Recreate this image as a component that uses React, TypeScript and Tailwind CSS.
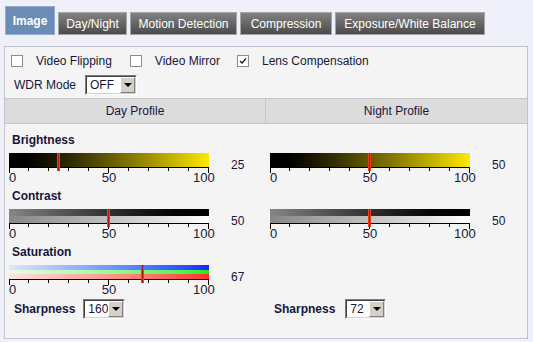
import React from "react";

// ─── TYPES ────────────────────────────────────────────────────────────────────

type BarKind = "brightness" | "contrast" | "saturation";

interface SliderProps {
  label?: string;
  value:  number;
  kind:   BarKind;
}

const TABS = [
  { label: "Day/Night",              w: "w-[69px]"  },
  { label: "Motion Detection",       w: "w-[107px]" },
  { label: "Compression",            w: "w-[92px]"  },
  { label: "Exposure/White Balance", w: "w-[150px]" },
];

const TICKS = Array.from({ length: 11 }, (_, i) => i);

// ─── SMALL PARTS ──────────────────────────────────────────────────────────────

function Checkbox({ checked }: { checked?: boolean }) {
  return (
    <span className="flex h-[12px] w-[12px] shrink-0 items-center justify-center border border-[#8c8c8c] bg-white">
      {checked && (
        <svg width="8" height="8" viewBox="0 0 8 8">
          <path d="M1 4 L3 6 L7 1.5" fill="none" stroke="#1a1a1a" strokeWidth="1.3" />
        </svg>
      )}
    </span>
  );
}

function Select({ value, className }: { value: string; className: string }) {
  return (
    <div className={`flex h-[20px] border border-t-[#7c7c7c] border-l-[#7c7c7c] border-b-white border-r-white ${className}`}>
      <div className="flex flex-1 items-center border border-t-[#404040] border-l-[#404040] border-b-[#d4d0c8] border-r-[#d4d0c8] bg-white">
        <span className="pl-[3px] text-[12px] leading-[14px]">{value}</span>
        <span className="ml-auto flex h-full w-[15px] items-center justify-center border border-t-white border-l-white border-b-[#808080] border-r-[#808080] bg-[#d4d0c8]">
          <span className="h-0 w-0 border-x-[4px] border-t-[4px] border-x-transparent border-t-black" />
        </span>
      </div>
    </div>
  );
}

function Bar({ kind }: { kind: BarKind }) {
  if (kind === "brightness") {
    return <div className="h-[14px] bg-linear-to-r from-[#000000] to-[#ffea00]" />;
  }
  if (kind === "contrast") {
    return (
      <div className="h-[14px]">
        <div className="h-[7px] bg-linear-to-r from-[#868686] to-[#000000]" />
        <div className="h-[7px] bg-linear-to-r from-[#868686] to-[#ffffff]" />
      </div>
    );
  }
  return (
    <div className="h-[14px]">
      <div className="h-[5px] bg-linear-to-r from-[#e4e4fc] to-[#2020ff]" />
      <div className="h-[4px] bg-linear-to-r from-[#e6fce6] to-[#10f010]" />
      <div className="h-[5px] bg-linear-to-r from-[#fde2e2] to-[#ff2a2a]" />
    </div>
  );
}

function Slider({ label, value, kind }: SliderProps) {
  return (
    <div className="h-[56px] pl-[4px]">
      <div className="h-[14px] pl-[3px] text-[12px] font-bold leading-[14px]">{label}</div>
      <div className="mt-[6px] flex">
        <div className="relative w-[200px]">
          <Bar kind={kind} />
          <div className="h-px w-[200px] bg-black" />
          {TICKS.map((i) => (
            <span
              key={i}
              className={`absolute top-[14px] w-px bg-black ${i % 5 === 0 ? "h-[6px]" : "h-[4px]"}`}
              style={{ left: Math.floor(i * 19.9) }}
            />
          ))}
          <span
            className="absolute top-0 flex h-[18px] w-[3px] justify-center bg-[#e8401a]"
            style={{ left: value * 2 - 2 }}
          >
            <span className="h-full w-px bg-[#b41c08]" />
          </span>
          <div className="relative mt-[2px] h-[15px] text-[13px] leading-[15px]">
            <span className="absolute left-0">0</span>
            <span className="absolute left-[100px] -translate-x-1/2">50</span>
            <span className="absolute left-[184px]">100</span>
          </div>
        </div>
        <span className="ml-[22px] mt-[5px] text-[12px] leading-[15px]">{value}</span>
      </div>
    </div>
  );
}

// ─── COMPONENT ────────────────────────────────────────────────────────────────

export default function App() {
  return (
    <div className="h-[342px] w-[533px] overflow-hidden bg-[#f0f0fa] font-['Liberation_Sans',Arial,sans-serif] text-[#16163c]">
      {/* ── Tabs ─────────────────────────────────────────────────────────── */}
      <div className="flex items-end gap-[3px] pl-[5px] pt-[6px]">
        <div className="flex h-[29px] w-[50px] items-center justify-center border border-[#94acc8] bg-[#6a8cb6] text-[12px] font-bold text-white">
          Image
        </div>
        {TABS.map((t) => (
          <div
            key={t.label}
            className={`flex h-[23px] items-center justify-center border border-[#a4a4a4] bg-linear-to-b from-[#828282] to-[#4c4c4c] text-[12px] text-white ${t.w}`}
          >
            {t.label}
          </div>
        ))}
      </div>

      {/* ── Panel ────────────────────────────────────────────────────────── */}
      <div className="ml-[4px] mt-[11px] w-[524px] border border-[#c2c2ca] bg-[#f4f4f4]">
        <div className="flex h-[14px] items-center pl-[6px] pt-0 mt-[7px] text-[12px]">
          <Checkbox />
          <span className="ml-[13px]">Video Flipping</span>
          <span className="ml-[18px]"><Checkbox /></span>
          <span className="ml-[13px]">Video Mirror</span>
          <span className="ml-[17px]"><Checkbox checked /></span>
          <span className="ml-[13px]">Lens Compensation</span>
        </div>

        <div className="mt-[7px] flex items-center pl-[9px] text-[12px]">
          <span>WDR Mode</span>
          <Select value="OFF" className="ml-[9px] w-[52px]" />
        </div>

        <div className="mt-[3px] grid grid-cols-2 border-y border-[#c6c6c6] bg-[#dcdcdc] text-[12px]">
          <div className="flex h-[24px] items-center justify-center border-r border-[#c6c6c6]">Day Profile</div>
          <div className="flex h-[24px] items-center justify-center">Night Profile</div>
        </div>

        <div className="grid grid-cols-2 pb-[19px]">
          <div className="pt-[9px]">
            <Slider label="Brightness" value={25} kind="brightness" />
            <Slider label="Contrast" value={50} kind="contrast" />
            <Slider label="Saturation" value={67} kind="saturation" />
            <div className="-mt-[2px] flex items-center pl-[9px] text-[12px]">
              <span className="font-bold">Sharpness</span>
              <Select value="160" className="ml-[8px] w-[42px]" />
            </div>
          </div>
          <div className="pt-[9px]">
            <Slider value={50} kind="brightness" />
            <Slider value={50} kind="contrast" />
            <div className="h-[56px]" />
            <div className="-mt-[2px] flex items-center pl-[8px] text-[12px]">
              <span className="font-bold">Sharpness</span>
              <Select value="72" className="ml-[10px] w-[41px]" />
            </div>
          </div>
        </div>
      </div>
    </div>
  );
}
